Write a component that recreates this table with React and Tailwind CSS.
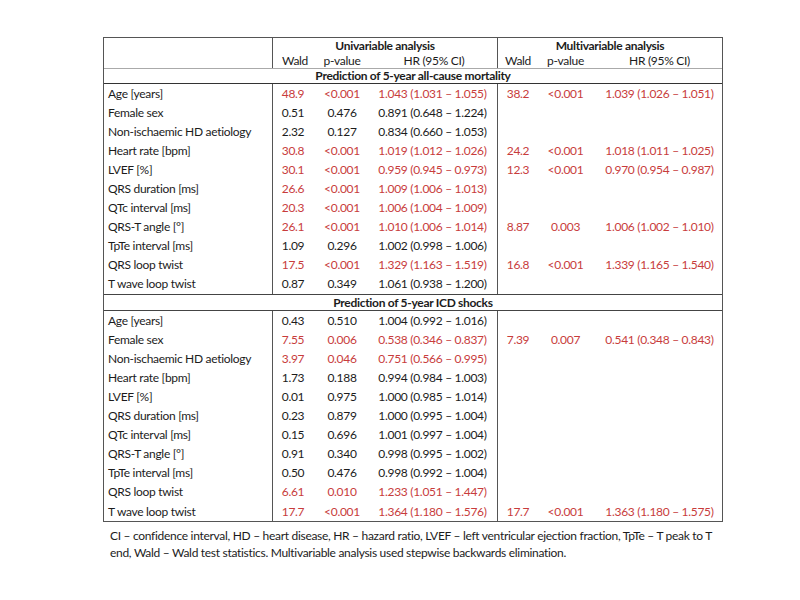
import React from "react";

const R = "text-[#c83c3c]";

const s1 = [
  ["Age [years]", "48.9", "<0.001", "1.043 (1.031 – 1.055)", true, ["38.2", "<0.001", "1.039 (1.026 – 1.051)"]],
  ["Female sex", "0.51", "0.476", "0.891 (0.648 – 1.224)", false],
  ["Non-ischaemic HD aetiology", "2.32", "0.127", "0.834 (0.660 – 1.053)", false],
  ["Heart rate [bpm]", "30.8", "<0.001", "1.019 (1.012 – 1.026)", true, ["24.2", "<0.001", "1.018 (1.011 – 1.025)"]],
  ["LVEF [%]", "30.1", "<0.001", "0.959 (0.945 – 0.973)", true, ["12.3", "<0.001", "0.970 (0.954 – 0.987)"]],
  ["QRS duration [ms]", "26.6", "<0.001", "1.009 (1.006 – 1.013)", true],
  ["QTc interval [ms]", "20.3", "<0.001", "1.006 (1.004 – 1.009)", true],
  ["QRS-T angle [°]", "26.1", "<0.001", "1.010 (1.006 – 1.014)", true, ["8.87", "0.003", "1.006 (1.002 – 1.010)"]],
  ["TpTe interval [ms]", "1.09", "0.296", "1.002 (0.998 – 1.006)", false],
  ["QRS loop twist", "17.5", "<0.001", "1.329 (1.163 – 1.519)", true, ["16.8", "<0.001", "1.339 (1.165 – 1.540)"]],
  ["T wave loop twist", "0.87", "0.349", "1.061 (0.938 – 1.200)", false],
];

const s2 = [
  ["Age [years]", "0.43", "0.510", "1.004 (0.992 – 1.016)", false],
  ["Female sex", "7.55", "0.006", "0.538 (0.346 – 0.837)", true, ["7.39", "0.007", "0.541 (0.348 – 0.843)"]],
  ["Non-ischaemic HD aetiology", "3.97", "0.046", "0.751 (0.566 – 0.995)", true],
  ["Heart rate [bpm]", "1.73", "0.188", "0.994 (0.984 – 1.003)", false],
  ["LVEF [%]", "0.01", "0.975", "1.000 (0.985 – 1.014)", false],
  ["QRS duration [ms]", "0.23", "0.879", "1.000 (0.995 – 1.004)", false],
  ["QTc interval [ms]", "0.15", "0.696", "1.001 (0.997 – 1.004)", false],
  ["QRS-T angle [°]", "0.91", "0.340", "0.998 (0.995 – 1.002)", false],
  ["TpTe interval [ms]", "0.50", "0.476", "0.998 (0.992 – 1.004)", false],
  ["QRS loop twist", "6.61", "0.010", "1.233 (1.051 – 1.447)", true],
  ["T wave loop twist", "17.7", "<0.001", "1.364 (1.180 – 1.576)", true, ["17.7", "<0.001", "1.363 (1.180 – 1.575)"]],
];

function Row({ r }) {
  const [label, w, p, hr, red, multi] = r;
  const c = red ? R : "";
  return (
    <div className="flex h-[19.1px] items-center">
      <div className="w-[169px] h-full border-r border-[#555] pl-[4px] flex items-center whitespace-nowrap">{label}</div>
      <div className={`w-[225px] h-full border-r border-[#555] flex items-center ${c}`}>
        <div className="w-[40px] text-center">{w}</div>
        <div className="w-[58px] text-center">{p}</div>
        <div className="w-[126px] text-center pr-[3px] whitespace-nowrap">{hr}</div>
      </div>
      <div className={`flex-1 h-full flex items-center ${R}`}>
        {multi && (
          <>
            <div className="w-[40px] text-center">{multi[0]}</div>
            <div className="w-[55px] text-center">{multi[1]}</div>
            <div className="flex-1 text-center pl-[4px] whitespace-nowrap">{multi[2]}</div>
          </>
        )}
      </div>
    </div>
  );
}

export default function App() {
  return (
    <div className="w-[800px] h-[600px] bg-white text-[#1c1c1c] text-[12px] tracking-[-0.3px]" style={{ fontFamily: "Lato, 'Open Sans', sans-serif" }}>
      <div className="pt-[37px] pl-[103px]">
        <div className="w-[620px] border border-[#555]">
          {/* header */}
          <div className="flex h-[31px] border-b border-[#aaa]">
            <div className="w-[169px] border-r border-[#555]"></div>
            <div className="w-[225px] border-r border-[#555] flex flex-col">
              <div className="h-[16px] flex items-center justify-center font-bold">Univariable analysis</div>
              <div className="flex h-[14px] items-center">
                <div className="w-[40px] text-center pl-[4px]">Wald</div>
                <div className="w-[58px] text-center">p-value</div>
                <div className="w-[126px] text-center">HR (95% CI)</div>
              </div>
            </div>
            <div className="flex-1 flex flex-col">
              <div className="h-[16px] flex items-center justify-center font-bold">Multivariable analysis</div>
              <div className="flex h-[14px] items-center">
                <div className="w-[40px] text-center">Wald</div>
                <div className="w-[55px] text-center">p-value</div>
                <div className="flex-1 text-center pl-[4px]">HR (95% CI)</div>
              </div>
            </div>
          </div>
          <div className="h-[15px] border-b border-[#333] flex items-center justify-center font-bold">
            Prediction of 5-year all-cause mortality
          </div>
          {s1.map((r, i) => (
            <Row key={i} r={r} />
          ))}
          <div className="h-[17px] border-y border-[#444] flex items-center justify-center font-bold">
            Prediction of 5-year ICD shocks
          </div>
          {s2.map((r, i) => (
            <Row key={i} r={r} />
          ))}
        </div>
        <div className="pl-[7px] pt-[5px] leading-[17px] w-[620px]">
          CI – confidence interval, HD – heart disease, HR – hazard ratio, LVEF – left ventricular ejection fraction, TpTe – T peak to T
          <br />
          end, Wald – Wald test statistics. Multivariable analysis used stepwise backwards elimination.
        </div>
      </div>
    </div>
  );
}
